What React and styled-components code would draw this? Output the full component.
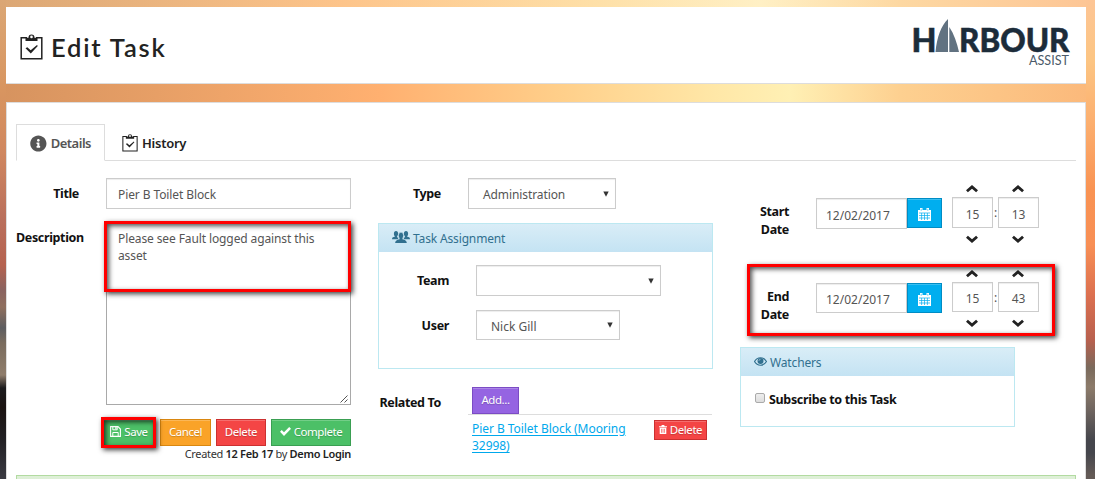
import React from 'react';
import styled, { createGlobalStyle, css } from 'styled-components';
import { FaInfoCircle } from 'react-icons/fa';

const Global = createGlobalStyle`
  * { box-sizing: border-box; }
  body { margin: 0; height: 479px; overflow: hidden; font-family: "Noto Sans", "Open Sans", sans-serif; font-size: 12px; color: #222; }
`;

const Page = styled.div`
  height: 479px;
  padding: 7px 9px 0 6px;
  overflow: hidden;
  background:
    linear-gradient(180deg, #dba775 0, #d89560 90px, #d08860 150px, #b96f5c 220px, #b5624f 265px, #8a6360 290px, #8f6f5e 307px, #5d5d60 328px, #7a6c5e 343px, #8f7d6b 375px, #1c1b1d 388px, #1a1311 407px, #222024 440px, #3a3a42 479px) 0 0 / 6px 100% no-repeat,
    linear-gradient(180deg, #fdc595 0, #fcc583 60px, #fcb070 120px, #f99353 190px, #f88f55 245px, #dc7050 295px, #b8604e 340px, #7a6a5c 368px, #8c7b6a 387px, #6f6560 410px, #45464c 440px, #45464c 453px, #635a56 475px) 100% 0 / 9px 100% no-repeat,
    linear-gradient(90deg, #dba775 0, #fdc48a 340px, #fee0a8 600px, #fff0c5 760px, #fdd8a2 900px, #fdc595 1095px) 0 0 / 100% 8px no-repeat,
    linear-gradient(90deg, #d6935f 0, #ffb070 380px, #ffcf8a 560px, #ffe8a8 720px, #fff0b4 790px, #fdd090 900px, #fbb87a 1095px);
`;

const Header = styled.header`
  display: flex;
  justify-content: space-between;
  align-items: flex-start;
  height: 77px;
  padding: 12px 16px 0 14px;
  background: #fff;
  border-bottom: 1px solid #ddd;
`;

const Heading = styled.h1`
  display: flex;
  align-items: center;
  gap: 8px;
  margin: 11px 0 0;
  font: 600 25.5px/34px Lato, sans-serif;
  letter-spacing: 1.8px;
  color: #222;
`;

const Main = styled.main`
  height: 390px;
  margin-top: 18px;
  padding: 21px 9px 0;
  background: #fff;
  border: 1px solid #ddd;
`;

const Tabs = styled.nav`
  display: flex;
  height: 37px;
  border-bottom: 1px solid #ddd;
`;

const Tab = styled.div`
  display: flex;
  align-items: center;
  gap: 4px;
  height: 37px;
  padding: 1px 16px 0;
  font-weight: 600;
  font-size: 13px;
  letter-spacing: -0.25px;
  border: 1px solid transparent;
  ${(p) => p.$active && css`
    width: 89px;
    padding: 1px 13px 0;
    letter-spacing: -0.5px;
    color: #555;
    background: #fff;
    border-color: #ddd;
    border-bottom-color: #fff;
  `}
`;

const Columns = styled.div`
  display: flex;
  align-items: flex-start;
  height: 314px;
`;

const Column = styled.section`
  width: ${(p) => p.$w}px;
  padding-top: ${(p) => p.$top || 0}px;
  margin-left: ${(p) => p.$gap || 0}px;
  flex: none;
`;

const Row = styled.div`
  position: relative;
  display: flex;
  align-items: flex-start;
  margin-top: ${(p) => p.$mt || 0}px;
`;

const Label = styled.label`
  width: ${(p) => p.$w}px;
  flex: none;
  padding-top: ${(p) => p.$top ?? 7}px;
  margin-right: ${(p) => p.$gap}px;
  font-weight: 700;
  font-size: 12.5px;
  line-height: 18px;
  letter-spacing: -0.35px;
  text-align: right;
  white-space: nowrap;
  color: #111;
`;

const Field = styled.div`
  width: ${(p) => p.$w}px;
  height: ${(p) => p.$h || 31}px;
  flex: none;
  padding: 1px 11px 0;
  display: flex;
  align-items: center;
  justify-content: ${(p) => (p.$center ? 'center' : 'flex-start')};
  color: #555;
  letter-spacing: ${(p) => p.$ls ?? -0.1}px;
  white-space: nowrap;
  background: #fff;
  border: 1px solid #ccc;
  box-shadow: inset 0 1px 1px rgba(0, 0, 0, 0.075);
`;

const DateField = styled(Field)`
  padding: 3px 0 0 9px;
`;

const TimeField = styled(Field)`
  padding-top: 3px;
`;

const SelectBox = styled(Field)`
  justify-content: space-between;
  padding: 2px 6px 0 14px;
  svg { margin-top: -2px; }
`;

const TextArea = styled.div`
  position: relative;
  width: 245px;
  height: 182px;
  padding: 6px 11px;
  line-height: 17px;
  letter-spacing: -0.11px;
  color: #555;
  white-space: pre;
  border: 1px solid #a9a9a9;
  svg { position: absolute; right: 2px; bottom: 1px; }
`;

const Mark = styled.div`
  position: absolute;
  left: ${(p) => p.$x}px;
  top: ${(p) => p.$y}px;
  width: ${(p) => p.$w}px;
  height: ${(p) => p.$h}px;
  border: 3px solid #f00;
  box-shadow: 2px 2px 5px rgba(0, 0, 0, 0.75), inset 2px 2px 5px rgba(0, 0, 0, 0.7);
  pointer-events: none;
`;

const Actions = styled.div`
  position: relative;
  display: flex;
  gap: 5px;
  margin: 14px 0 0 87px;
`;

const tones = {
  green: ['#4cc067', '#3a9f52'],
  orange: ['#faa328', '#d98710'],
  red: ['#f44545', '#cc3030'],
  purple: ['#9564e2', '#7b4cc4'],
  blue: ['#00aeef', '#008cc4'],
};

const Button = styled.button`
  display: flex;
  align-items: center;
  justify-content: center;
  gap: 3px;
  flex: none;
  width: ${(p) => p.$w}px;
  height: ${(p) => p.$h || 27}px;
  padding: 0 0 2px;
  font: inherit;
  font-size: 11.5px;
  letter-spacing: -0.45px;
  color: #fff;
  text-shadow: 0 1px 1px rgba(0, 0, 0, 0.2);
  background: ${(p) => tones[p.$tone][0]};
  border: 1px solid ${(p) => tones[p.$tone][1]};
  box-shadow: inset 0 1px 0 rgba(255, 255, 255, 0.22);
`;

const CalendarButton = styled(Button)`
  padding: 3px 0 0;
`;

const Created = styled.div`
  width: 335px;
  text-align: right;
  font-size: 11px;
  line-height: 16px;
  letter-spacing: -0.31px;
  color: #333;
  b { font-weight: 600; color: #222; }
`;

const Card = styled.div`
  width: ${(p) => p.$w}px;
  height: ${(p) => p.$h}px;
  margin-top: ${(p) => p.$mt}px;
  border: 1px solid #bce8f1;
`;

const CardTitle = styled.div`
  display: flex;
  align-items: center;
  gap: 3px;
  height: 28px;
  padding: 1px 13px 0;
  letter-spacing: -0.15px;
  color: #31708f;
  background: linear-gradient(#d9edf7, #c4e3f3);
  svg { margin-top: -3px; }
`;

const Related = styled.div`
  width: 244px;
  padding-left: 4px;
`;

const AddLine = styled.div`
  margin-left: -4px;
  padding-left: 4px;
  border-bottom: 1px solid #ddd;
`;

const RelatedItem = styled.div`
  display: flex;
  justify-content: space-between;
  align-items: flex-start;
  padding: 5px 5px 0 0;
`;

const Link = styled.a`
  font-size: 12px;
  line-height: 17px;
  letter-spacing: -0.05px;
  color: #00a8ec;
  text-decoration: underline;
  text-underline-offset: 2px;
`;

const Spinner = styled.div`
  display: flex;
  flex-direction: column;
  align-items: center;
  gap: 5px;
  margin-top: -14px;
  > svg { margin-right: 2px; }
  > svg:first-child { position: relative; top: 1px; }
  > svg:last-child { margin-top: 2px; }
`;

const Colon = styled.span`
  width: 5px;
  padding-top: 6px;
  text-align: center;
  line-height: 17px;
  color: #555;
`;

const Spacer = styled.span`
  width: 10px;
`;

const Check = styled.div`
  display: flex;
  align-items: center;
  gap: 4px;
  padding: 15px 0 0 14px;
  font-size: 12.5px;
  font-weight: 700;
  letter-spacing: -0.33px;
  color: #111;
`;

const Box = styled.i`
  width: 10px;
  height: 10px;
  margin-top: -4px;
  border: 1px solid #aaa;
  border-radius: 2px;
  background: linear-gradient(#eee, #ddd);
`;

const Alert = styled.div`
  height: 40px;
  border: 1px solid #b2dba1;
  background: linear-gradient(#dff0d8, #c8e5bc);
`;

const Clipboard = ({ w, h }) => (
  <svg width={w} height={h} viewBox="0 0 23 26" fill="none">
    <path d="M7 3.700H1.200v21h20.600v-21H16" stroke="#222" strokeWidth="1.500" />
    <path d="M5.500 7V3.700h3a3 3.200 0 0 1 6 0h3V7z" fill="#222" />
    <circle cx="11.500" cy="2.900" r="1.300" fill="#fff" />
    <path d="m5.500 14.300 1.800-1 3.400 3 6.300-5.300.8.900-7 7.700z" fill="#222" />
  </svg>
);

const Arrow = () => (
  <svg width="6" height="6" viewBox="0 0 6 6"><path d="M.3.5h5.400L3 5.700z" fill="#333" /></svg>
);

const Chevron = ({ down }) => (
  <svg width="12" height="8" viewBox="0 0 12 8">
    <path d={down ? 'M0 2.800 1.900.700 6 4.200 10.100.700 12 2.800 6 8z' : 'M0 5.200 1.900 7.300 6 3.800l4.100 3.500L12 5.200 6 0z'} fill="#222" />
  </svg>
);

const Calendar = () => (
  <svg width="13" height="13" viewBox="0 0 13 13">
    <path d="M0 2h2V0h2.500v2h4V0H11v2h2v11H0z" fill="#fff" />
    <path d="M1 5h11M1 7.500h11M1 10h11M3.600 5v7M6.500 5v7M9.400 5v7" stroke="#00aeef" strokeWidth=".7" />
    <path d="M3.200.8v2M9.800.8v2" stroke="#00aeef" strokeWidth=".6" />
  </svg>
);

const Floppy = () => (
  <svg width="11" height="11" viewBox="0 0 11 11" fill="none" stroke="#fff">
    <path d="M.6.600H8l2.400 2.400v7.400H.600z" strokeWidth="1.100" />
    <path d="M2.800 10.400V6.500h5.400v3.900M2.800.600v3.200h4.400V.600" strokeWidth="1" />
    <path d="M5.900 1v2.300" strokeWidth="1.200" />
  </svg>
);

const Tick = () => (
  <svg width="11" height="9" viewBox="0 0 11 9">
    <path d="M0 4.700 1.700 3l2.300 2.200L9.200 0 11 1.800 4 9z" fill="#fff" />
  </svg>
);

const Trash = () => (
  <svg width="8" height="9" viewBox="0 0 8 9">
    <path d="M0 1.200h2.300L2.800 0h2.400l.5 1.200H8v1H0zM.7 2.700h6.600V9H.700z" fill="#fff" />
    <path d="M2.500 3.800v4M4 3.800v4M5.500 3.800v4" stroke="#f44545" strokeWidth=".6" />
  </svg>
);

const Eye = () => (
  <svg width="13" height="9" viewBox="0 0 13 9">
    <path d="M.5 4.500c3-5 9-5 12 0-3 5-9 5-12 0z" fill="none" stroke="#31708f" strokeWidth="1.200" />
    <circle cx="6.500" cy="3.900" r="3" fill="#31708f" />
    <path d="M5 3.800c0-.9.600-1.500 1.500-1.500" fill="none" stroke="#d0e8f4" strokeWidth=".6" />
  </svg>
);

const Group = () => (
  <svg width="18" height="12" viewBox="0 0 18 12" fill="#31708f">
    <ellipse cx="4" cy="2.800" rx="2.100" ry="2.800" />
    <ellipse cx="14" cy="2.800" rx="2.100" ry="2.800" />
    <path d="M0 8.300c0-2 1.300-2.200 3-2.800V4h2v1.500l1.500 2.800zM18 8.300c0-2-1.300-2.200-3-2.800V4h-2v1.500l-1.500 2.800z" />
    <ellipse cx="9" cy="4.600" rx="2.700" ry="3.500" stroke="#d0e8f4" strokeWidth=".8" />
    <path d="M3.200 12c0-2.600 2-3 4.400-3.800V7h2.800v1.200c2.400.8 4.400 1.200 4.400 3.800z" />
  </svg>
);

const LogoSvg = styled.svg`
  overflow: visible;
`;

const Logo = () => (
  <LogoSvg width="160" height="50" viewBox="-2 0 160 50" fontFamily="Lato, sans-serif">
    <g fill="#1c2c3a" stroke="#1c2c3a" strokeWidth=".5" fontSize="32.500" fontWeight="900">
      <text x="-.5" y="33" textLength="25" lengthAdjust="spacingAndGlyphs">H</text>
      <text x="47" y="33" textLength="110.500" lengthAdjust="spacingAndGlyphs">RBOUR</text>
    </g>
    <path d="M36 0v33H23.500C25 18 29 7 36 0zM37.300 8C42 15 45 24 47 33h-9.700z" fill="#617281" />
    <text x="117" y="46" fontSize="13.500" fill="#4b5a69" textLength="40" lengthAdjust="spacingAndGlyphs">ASSIST</text>
  </LogoSvg>
);

const TimeSpinner = ({ value, h }) => (
  <Spinner>
    <Chevron />
    <TimeField $w={41} $h={h} $center>{value}</TimeField>
    <Chevron down />
  </Spinner>
);

const DateRow = ({ name, mt, hour, minute, fieldHeight, children }) => (
  <Row $mt={mt}>
    <Label $w={49} $gap={27} $top={5}>{name}<br />Date</Label>
    <DateField $w={91} $h={fieldHeight} $ls={0}>12/02/2017</DateField>
    <CalendarButton $w={35} $h={30} $tone="blue"><Calendar /></CalendarButton>
    <Spacer />
    <TimeSpinner value={hour} h={fieldHeight} />
    <Colon>:</Colon>
    <TimeSpinner value={minute} h={fieldHeight} />
    {children}
  </Row>
);

export default function App() {
  return (
    <Page>
      <Global />
      <Header>
        <Heading><Clipboard w={23} h={26} />Edit Task</Heading>
        <Logo />
      </Header>
      <Main>
        <Tabs>
          <Tab $active><FaInfoCircle size={17} />Details</Tab>
          <Tab><Clipboard w={16} h={18} />History</Tab>
        </Tabs>
        <Columns>
          <Column $w={335} $top={17}>
            <Row>
              <Label $w={63} $gap={27}>Title</Label>
              <Field $w={245}>Pier B Toilet Block</Field>
            </Row>
            <Row $mt={14}>
              <Label $w={67} $gap={23} $top={6}>Description</Label>
              <TextArea>
                {'Please see Fault logged against this\nasset'}
                <svg width="8" height="8" viewBox="0 0 8 8"><path d="M.5 7.500l7-7M4.500 7.500l3-3" stroke="#555" /></svg>
              </TextArea>
              <Mark $x={88} $y={-2} $w={247} $h={71} />
            </Row>
            <Actions>
              <Button $w={52} $tone="green"><Floppy />Save</Button>
              <Button $w={51} $tone="orange">Cancel</Button>
              <Button $w={50} $tone="red">Delete</Button>
              <Button $w={80} $tone="green"><Tick />Complete</Button>
              <Mark $x={-2} $y={-2} $w={55} $h={31} />
            </Actions>
            <Created>Created <b>12 Feb 17</b> by <b>Demo Login</b></Created>
          </Column>
          <Column $w={335} $gap={27} $top={17}>
            <Row>
              <Label $w={63} $gap={27}>Type</Label>
              <SelectBox $w={148}>Administration<Arrow /></SelectBox>
            </Row>
            <Card $w={335} $h={146} $mt={14}>
              <CardTitle><Group />Task Assignment</CardTitle>
              <Row $mt={13}>
                <Label $w={70} $gap={27}>Team</Label>
                <SelectBox $w={185}><span /><Arrow /></SelectBox>
              </Row>
              <Row $mt={14}>
                <Label $w={70} $gap={27}>User</Label>
                <SelectBox $w={144} $h={30} $ls={0}>Nick Gill<Arrow /></SelectBox>
              </Row>
            </Card>
            <Row $mt={18}>
              <Label $w={63} $gap={27}>Related To</Label>
              <Related>
                <AddLine><Button $w={47} $tone="purple">Add...</Button></AddLine>
                <RelatedItem>
                  <Link>Pier B Toilet Block (Mooring<br />32998)</Link>
                  <Button $w={53} $h={20} $tone="red"><Trash />Delete</Button>
                </RelatedItem>
              </Related>
            </Row>
          </Column>
          <Column $w={320} $gap={27} $top={37}>
            <DateRow name="Start" hour="15" minute="13" />
            <DateRow name="End" mt={40} hour="15" minute="43" fieldHeight={30}>
              <Mark $x={7} $y={-19} $w={308} $h={72} />
            </DateRow>
            <Card $w={275} $h={80} $mt={20}>
              <CardTitle><Eye />Watchers</CardTitle>
              <Check><Box />Subscribe to this Task</Check>
            </Card>
          </Column>
        </Columns>
        <Alert />
      </Main>
    </Page>
  );
}
